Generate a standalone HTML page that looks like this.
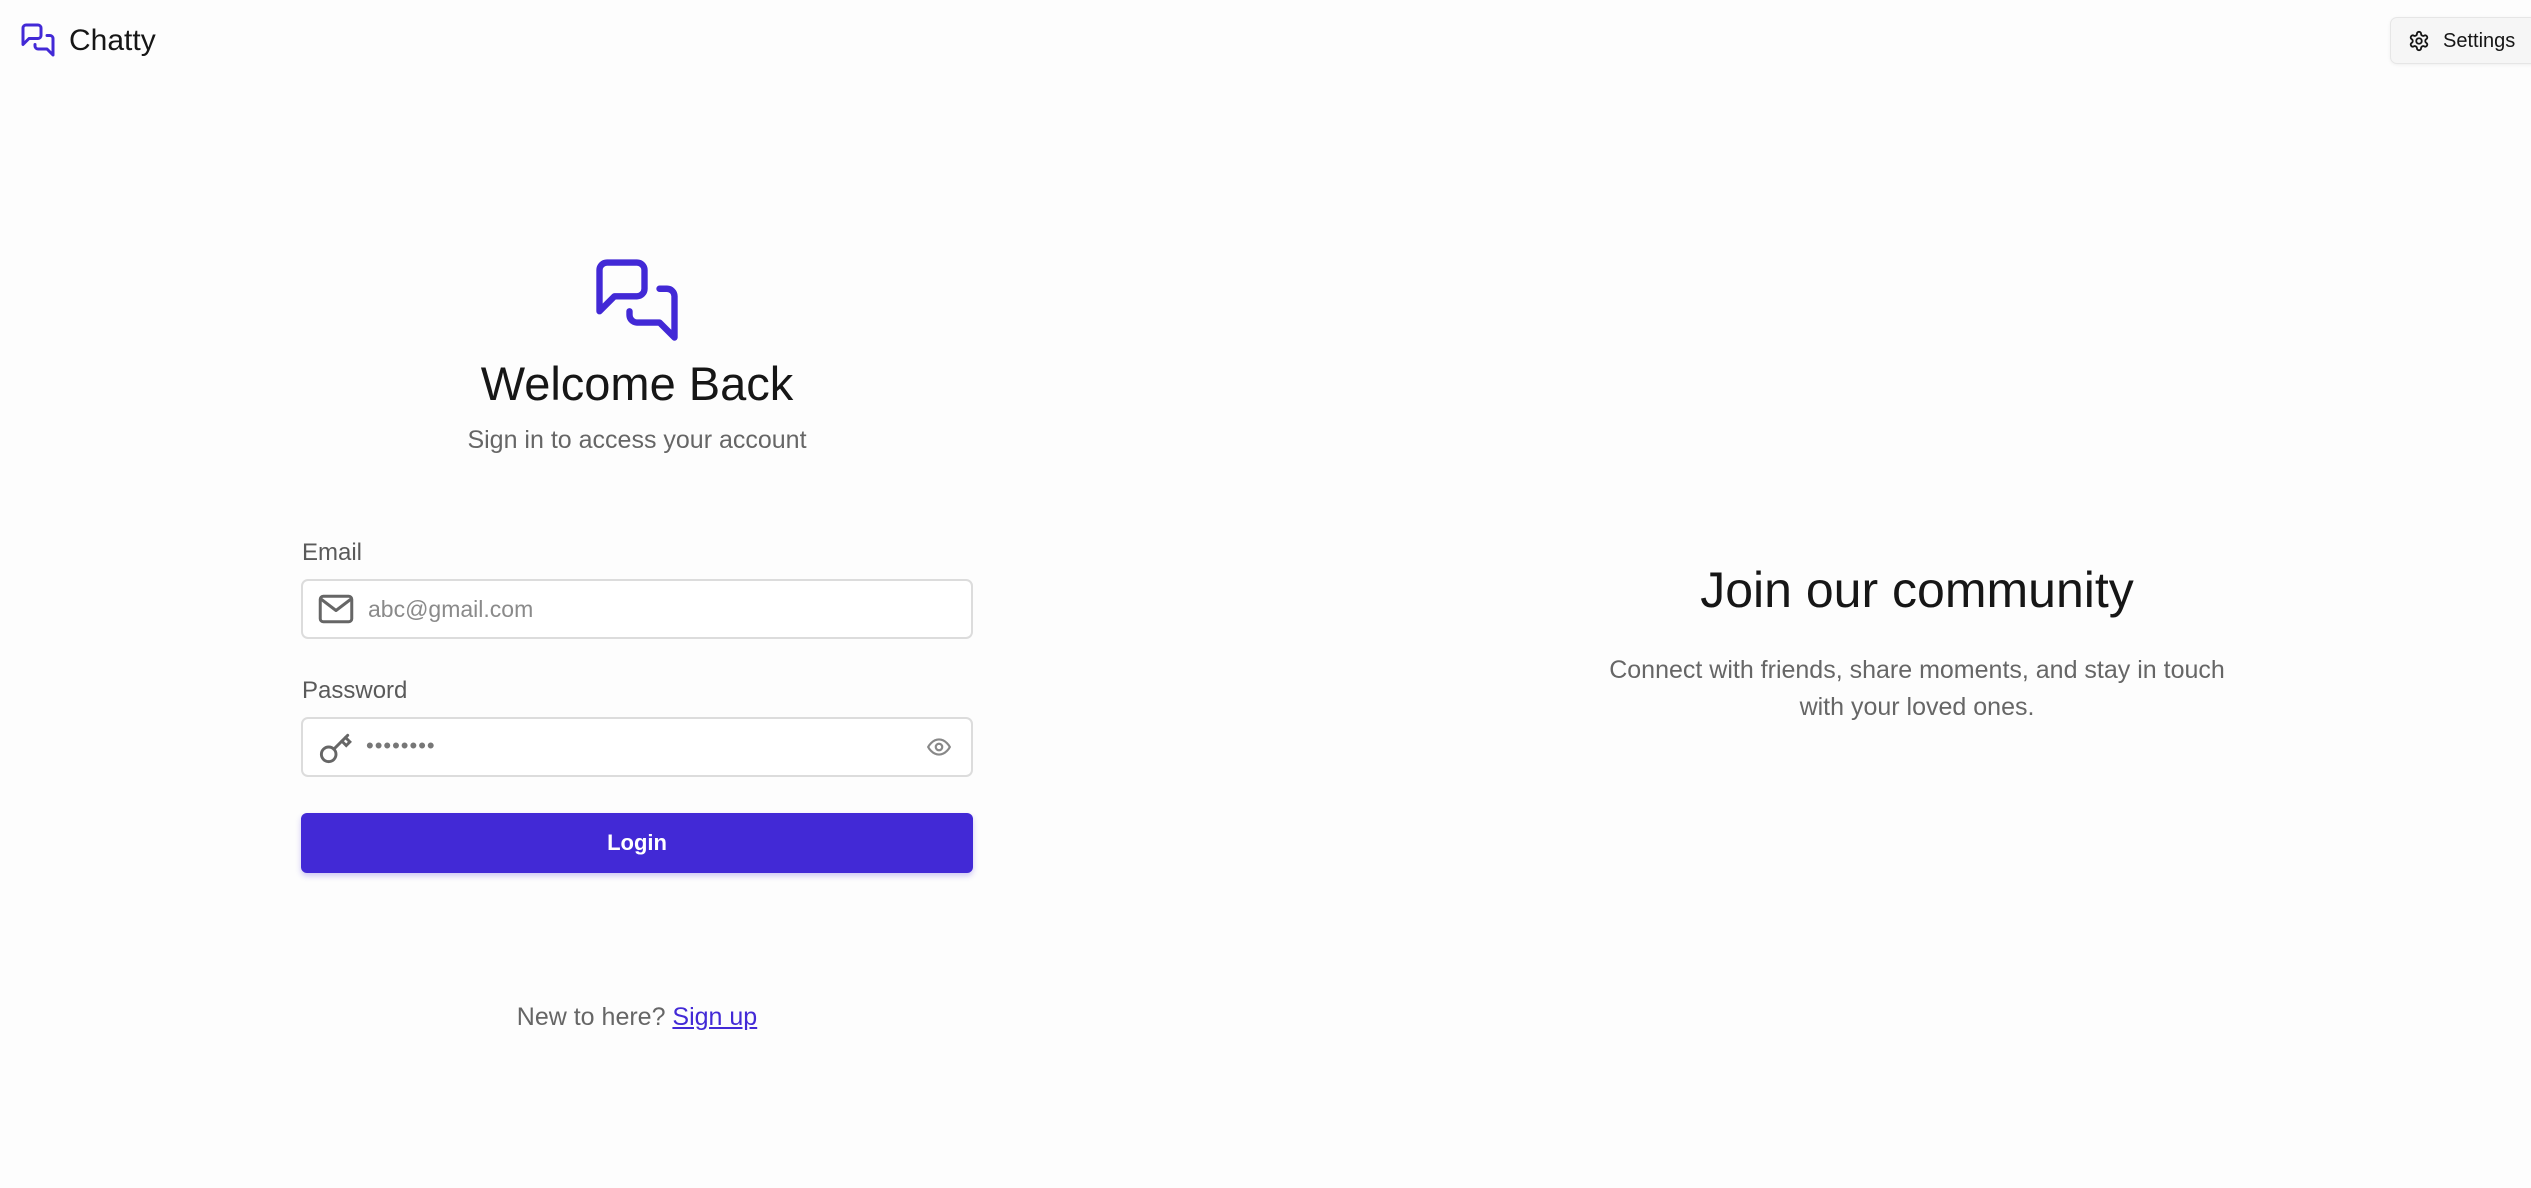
<!DOCTYPE html>
<html><head><meta charset="utf-8"><style>
*{margin:0;padding:0;box-sizing:border-box}
body{width:2531px;height:1188px;background:#fdfdfd;font-family:"Liberation Sans","DejaVu Sans",sans-serif;position:relative;overflow:hidden;color:#161616}
.a{position:absolute}
.c{text-align:center}
.lbl{font-size:24px;color:#5a5a5a}
.inp{border:2px solid #dcdcdc;border-radius:7px;background:#fff;left:301px;width:672px;height:60px}
</style></head><body>
<svg class="a" style="left:20px;top:22px" width="36" height="36" viewBox="0 0 24 24" fill="none" stroke="#4229d6" stroke-width="2" stroke-linecap="round" stroke-linejoin="round"><path d="M14 9a2 2 0 0 1-2 2H6l-4 4V4a2 2 0 0 1 2-2h8a2 2 0 0 1 2 2z"/><path d="M18 9h2a2 2 0 0 1 2 2v11l-4-4h-6a2 2 0 0 1-2-2v-1"/></svg>
<div class="a" style="left:69px;top:22px;font-size:30px;line-height:38px;color:#161616">Chatty</div>
<div class="a" style="left:2390px;top:17px;width:160px;height:47px;background:#f6f6f6;border:1px solid #e6e6e6;border-radius:7px;box-shadow:0 1px 3px rgba(0,0,0,.06)"></div>
<svg class="a" style="left:2408px;top:30px" width="22" height="22" viewBox="0 0 24 24" fill="none" stroke="#161616" stroke-width="2" stroke-linecap="round" stroke-linejoin="round"><path d="M12.22 2h-.44a2 2 0 0 0-2 2v.18a2 2 0 0 1-1 1.73l-.43.25a2 2 0 0 1-2 0l-.15-.08a2 2 0 0 0-2.73.73l-.22.38a2 2 0 0 0 .73 2.730l.15.1a2 2 0 0 1 1 1.72v.51a2 2 0 0 1-1 1.74l-.15.09a2 2 0 0 0-.73 2.73l.22.38a2 2 0 0 0 2.73.73l.15-.08a2 2 0 0 1 2 0l.43.25a2 2 0 0 1 1 1.73V20a2 2 0 0 0 2 2h.44a2 2 0 0 0 2-2v-.18a2 2 0 0 1 1-1.73l.43-.25a2 2 0 0 1 2 0l.15.08a2 2 0 0 0 2.73-.73l.22-.39a2 2 0 0 0-.73-2.73l-.15-.08a2 2 0 0 1-1-1.74v-.5a2 2 0 0 1 1-1.74l.15-.09a2 2 0 0 0 .73-2.73l-.22-.38a2 2 0 0 0-2.73-.73l-.15.08a2 2 0 0 1-2 0l-.43-.25a2 2 0 0 1-1-1.73V4a2 2 0 0 0-2-2z"/><circle cx="12" cy="12" r="3"/></svg>
<div class="a" style="left:2443px;top:26px;font-size:20px;line-height:30px">Settings</div>

<svg class="a" style="left:592px;top:255px" width="90" height="90" viewBox="0 0 24 24" fill="none" stroke="#4229d6" stroke-width="1.7" stroke-linecap="round" stroke-linejoin="round"><path d="M14 9a2 2 0 0 1-2 2H6l-4 4V4a2 2 0 0 1 2-2h8a2 2 0 0 1 2 2z"/><path d="M18 9h2a2 2 0 0 1 2 2v11l-4-4h-6a2 2 0 0 1-2-2v-1"/></svg>
<div class="a c" style="left:337px;width:600px;top:356px;font-size:47px;line-height:56px;color:#161616">Welcome Back</div>
<div class="a c" style="left:337px;width:600px;top:424px;font-size:25px;line-height:32px;color:#666">Sign in to access your account</div>

<div class="a lbl" style="left:302px;top:539px">Email</div>
<div class="a inp" style="top:579px"></div>
<svg class="a" style="left:318px;top:594px" width="36" height="30" viewBox="0 0 24 20" fill="none" stroke="#666" stroke-width="2" stroke-linejoin="round"><rect x="1.5" y="1.5" width="21" height="17" rx="2"/><path d="M1.5 3l10.5 8 10.5-8"/></svg>
<div class="a" style="left:368px;top:594px;font-size:23px;line-height:30px;color:#8a8a8a">abc@gmail.com</div>

<div class="a lbl" style="left:302px;top:677px">Password</div>
<div class="a inp" style="top:717px"></div>
<svg class="a" style="left:318px;top:728px" width="36" height="38" viewBox="0 0 24 26" fill="none" stroke="#666" stroke-width="2" stroke-linecap="round"><circle cx="7" cy="18" r="5"/><path d="M10.5 14.5L20 5"/><path d="M16 9l3 3 2.5-2.5-3-3"/></svg>
<div class="a" style="left:366px;top:731px;font-size:22px;line-height:30px;color:#777;letter-spacing:1px">••••••••</div>
<svg class="a" style="left:924px;top:734px" width="30" height="26" viewBox="0 0 24 24" fill="none" stroke="#888" stroke-width="2"><path d="M2 12s3.5-7 10-7 10 7 10 7-3.5 7-10 7S2 12 2 12z"/><circle cx="12" cy="12" r="3"/></svg>

<div class="a c" style="left:301px;top:813px;width:672px;height:60px;background:#4229d6;border-radius:6px;box-shadow:0 3px 6px rgba(66,41,214,.25);color:#fff;font-size:22px;font-weight:bold;line-height:60px">Login</div>

<div class="a c" style="left:337px;width:600px;top:1001px;font-size:25px;line-height:32px;color:#666">New to here? <span style="color:#4229d6;text-decoration:underline">Sign up</span></div>

<div class="a c" style="left:1567px;width:700px;top:558px;font-size:50px;line-height:64px;color:#161616">Join our community</div>
<div class="a c" style="left:1517px;width:800px;top:652px;font-size:25px;line-height:37px;color:#666">Connect with friends, share moments, and stay in touch<br>with your loved ones.</div>
</body></html>
